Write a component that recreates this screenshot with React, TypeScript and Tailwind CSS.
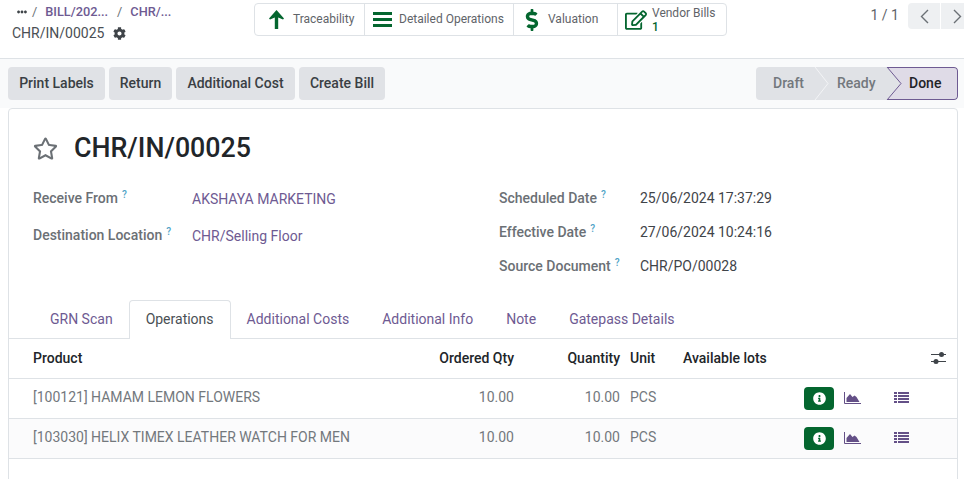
import React from "react";
import { FaCog, FaDollarSign, FaInfoCircle, FaEllipsisH, FaRegEdit, FaRegStar } from "react-icons/fa";

function Help() {
  return <sup className="text-[10px] text-[#4fa3c7] font-medium ml-[4px]">?</sup>;
}

function Field({ label, value }: { label: string; value: string }) {
  return (
    <div className="flex items-start h-[34px]">
      <div className="w-[141px] font-medium text-[#6b7075]">{label}<Help /></div>
      <div className="text-[#3f4449]">{value}</div>
    </div>
  );
}

function Stat({ icon, children, w }: { icon: React.ReactNode; children: React.ReactNode; w: string }) {
  return (
    <div className={"flex items-center h-full border-r border-[#dee2e6] last:border-r-0 " + w}>
      {icon}
      {children}
    </div>
  );
}

function ArrowIcon() {
  return (
    <svg width="15" height="19" viewBox="0 0 15 19" className="mr-[9px]">
      <path d="M7.5 0 L15 8.5 L14 9.5 L9.2 7.5 V19 H5.8 V7.5 L1 9.5 L0 8.5 Z" fill="#04662f" />
    </svg>
  );
}

function BarsIcon() {
  return (
    <svg width="19" height="15" viewBox="0 0 19 15" className="mr-[7px]">
      <path d="M0 0H19V3H0ZM0 6H19V9H0ZM0 12H19V15H0Z" fill="#04662f" />
    </svg>
  );
}

function ChartIcon() {
  return (
    <svg width="17" height="12" viewBox="0 0 17 12">
      <path d="M0.5 0V11.5H17" stroke="#645087" fill="none" />
      <path d="M2.5 10V6L6 2L8.5 5L10.5 3.5L12.5 5L15.5 10Z" fill="#645087" />
    </svg>
  );
}

function ListIcon() {
  return (
    <svg width="15" height="11" viewBox="0 0 15 11">
      <path d="M0 0H3V2H0ZM4 0H15V2H4ZM0 3H3V5H0ZM4 3H15V5H4ZM0 6H3V8H0ZM4 6H15V8H4ZM0 9H3V11H0ZM4 9H15V11H4Z" fill="#645087" />
    </svg>
  );
}

function Chevron({ flip }: { flip?: boolean }) {
  return (
    <svg width="9" height="15" viewBox="0 0 9 15" className={flip ? "rotate-180" : ""}>
      <path d="M8 1L1.5 7.5L8 14" stroke="#6b7075" strokeWidth="1.4" fill="none" />
    </svg>
  );
}

function Row({ name, shade }: { name: string; shade?: boolean }) {
  return (
    <div className={"flex items-center h-[40px] pb-[2px] border-b border-[#dee2e6] text-[#73787d] " + (shade ? "bg-[#fbfbfc]" : "")}>
      <div className="w-[399px] pl-[24px]">{name}</div>
      <div className="w-[106px] text-right">10.00</div>
      <div className="w-[106px] text-right">10.00</div>
      <div className="w-[63px] pl-[10px]">PCS</div>
      <div className="w-[121px]"></div>
      <div className="w-[30px] h-[23px] bg-[#04662f] rounded-[4px] flex items-center justify-center text-white mt-[2px]"><FaInfoCircle size={13} /></div>
      <div className="w-[60px] pl-[10px] mt-[1px] flex"><ChartIcon /></div>
      <div className="flex"><ListIcon /></div>
    </div>
  );
}

const buttons: [string, string][] = [
  ["Print Labels", "w-[97px]"],
  ["Return", "w-[63px]"],
  ["Additional Cost", "w-[119px]"],
  ["Create Bill", "w-[86px]"],
];

export default function App() {
  return (
    <div className="w-[964px] h-[479px] overflow-hidden bg-white text-[14px] leading-[21px] text-[#3f4449] font-['Roboto',sans-serif]">
      <div className="h-[59px] border-b border-[#dee2e6] flex bg-white">
        <div className="w-[254px] pl-[12px] pt-[1px]">
          <div className="flex items-center h-[21px] text-[12.75px] font-medium text-[#6e5a92]">
            <FaEllipsisH size={10} className="text-[#3f4449] ml-[5px]" />
            <span className="text-[#6b7075] font-normal ml-[5px]">/</span>
            <span className="ml-[8px]">BILL/202...</span>
            <span className="text-[#6b7075] font-normal ml-[9px]">/</span>
            <span className="ml-[8px]">CHR/...</span>
          </div>
          <div className="flex items-center h-[24px] mt-[-1px] text-[14px] text-[#4a4f54]">
            CHR/IN/00025
            <FaCog size={13} className="ml-[9px] text-[#3f4449]" />
          </div>
        </div>
        <div className="mt-[3px] h-[33px] border border-[#dee2e6] rounded-[4px] flex text-[12px] text-[#5f6469] bg-white">
          <Stat w="w-[110px] pl-[14px]" icon={<ArrowIcon />}>Traceability</Stat>
          <Stat w="w-[149px] pl-[8px]" icon={<BarsIcon />}>Detailed Operations</Stat>
          <Stat w="w-[104px] pl-[7px]" icon={<FaDollarSign size={22} className="text-[#04662f] mr-[5px]" />}>Valuation</Stat>
          <Stat w="w-[108px] pl-[7px]" icon={<FaRegEdit size={22} className="text-[#04662f] mr-[5px]" />}>
            <div className="leading-[14px] mt-[1px]">
              <div>Vendor Bills</div>
              <div className="font-medium text-[#04662f]">1</div>
            </div>
          </Stat>
        </div>
        <div className="ml-auto flex items-start pt-[3px]">
          <span className="text-[14px] text-[#5f6469] mt-[2px] mr-[9px]">1 / 1</span>
          <div className="w-[32px] h-[26px] bg-[#eef0f2] rounded-l-[4px] flex items-center justify-center"><Chevron /></div>
          <div className="w-[23px] h-[26px] ml-[1px] bg-[#eef0f2] flex items-center pl-[12px] overflow-hidden"><Chevron flip /></div>
        </div>
      </div>
      <div className="h-[49px] bg-[#f9fafb] flex items-start pt-[8px] pl-[8px] pr-[6px] font-medium">
        <div className="flex gap-[4px]">
          {buttons.map(([b, w]) => (
            <div key={b} className={"h-[33px] flex items-center justify-center bg-[#e0e2e6] rounded-[4px] text-[#3a3f44] " + w}>{b}</div>
          ))}
        </div>
        <div className="ml-auto h-[33px] flex w-[202px] relative rounded-[4px] overflow-hidden bg-[#e0e2e6] text-[#73787d]">
          <div className="w-[64px] pl-[17px] flex items-center">Draft</div>
          <div className="w-[67px] pl-[17px] flex items-center">Ready</div>
          <div className="flex-1 pl-[22px] flex items-center bg-[#dfdbe7] text-[#1f2327] border border-l-0 border-[#6e5a92] rounded-r-[4px]">Done</div>
          <svg className="absolute left-0 top-0" width="202" height="33" viewBox="0 0 202 33" fill="none">
            <path d="M59 0 L72 16.5 L59 33" stroke="#f3f4f6" strokeWidth="1" />
            <path d="M131 0 L145 16.5 L131 33 Z" fill="#e0e2e6" />
            <path d="M131 0 L145 16.5 L131 33" stroke="#6e5a92" strokeWidth="1" />
          </svg>
        </div>
      </div>
      <div className="mx-[8px] w-[950px] h-[400px] bg-white border border-[#dee2e6] rounded-t-[4px]">
        <div className="flex items-center h-[78px] pl-[24px]">
          <FaRegStar size={25} className="text-[#6b7075]" />
          <div className="ml-[16px] text-[26.8px] font-medium text-[#212529]">CHR/IN/00025</div>
        </div>
        <div className="flex h-[113px] pt-[1px]">
          <div className="w-[466px] pl-[24px]">
            <div className="h-[37px] flex"><div className="w-[159px] font-medium text-[#6b7075]">Receive From<Help /></div><div className="mt-[1px] text-[#6e5a92]">AKSHAYA MARKETING</div></div>
            <div className="h-[37px] flex"><div className="w-[159px] font-medium text-[#6b7075]">Destination Location<Help /></div><div className="mt-[1px] text-[#6e5a92]">CHR/Selling Floor</div></div>
          </div>
          <div className="flex-1 pl-[24px]">
            <Field label="Scheduled Date" value="25/06/2024 17:37:29" />
            <Field label="Effective Date" value="27/06/2024 10:24:16" />
            <Field label="Source Document" value="CHR/PO/00028" />
          </div>
        </div>
        <div className="flex h-[39px] border-b border-[#dee2e6] pl-[24px] text-[#6e5a92]">
          <div className="pl-[17px] pr-[16px] pt-[9px]">GRN Scan</div>
          <div className="h-[39px] px-[16px] pt-[8px] bg-white border border-b-0 border-[#dee2e6] rounded-t-[4px] text-[#4a4f54]">Operations</div>
          <div className="pl-[16px] pr-[17px] pt-[9px]">Additional Costs</div>
          <div className="pl-[16px] pr-[17px] pt-[9px]">Additional Info</div>
          <div className="px-[16px] pt-[9px]">Note</div>
          <div className="px-[17px] pt-[9px]">Gatepass Details</div>
        </div>
        <div className="flex items-center h-[40px] border-b border-[#dee2e6] font-medium text-[#212529]">
          <div className="w-[399px] pl-[24px]">Product</div>
          <div className="w-[106px] text-right">Ordered Qty</div>
          <div className="w-[106px] text-right">Quantity</div>
          <div className="w-[63px] pl-[10px]">Unit</div>
          <div>Available lots</div>
          <svg className="ml-auto mr-[11px] mb-[2px]" width="15" height="14" viewBox="0 0 15 14">
            <path d="M0 3.5H15M0 10.5H15" stroke="#3f4449" strokeWidth="1" />
            <circle cx="10.5" cy="3.5" r="2.5" fill="#3f4449" />
            <circle cx="5" cy="10.5" r="2.5" fill="#3f4449" />
          </svg>
        </div>
        <Row name="[100121] HAMAM LEMON FLOWERS" />
        <Row name="[103030] HELIX TIMEX LEATHER WATCH FOR MEN" shade />
      </div>
    </div>
  );
}
